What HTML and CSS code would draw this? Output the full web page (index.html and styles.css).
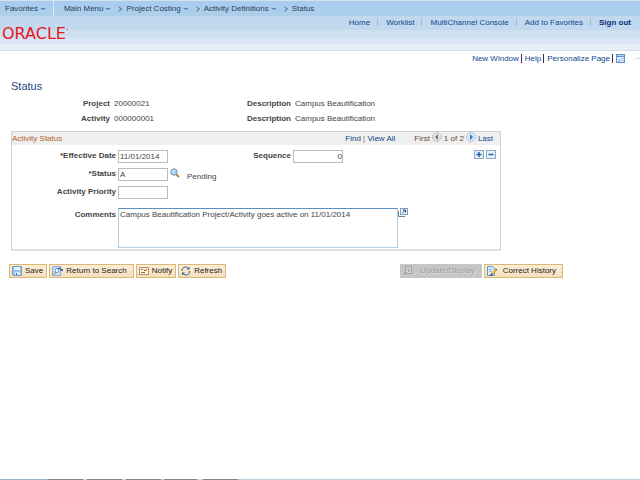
FILE: index.html
```html
<!DOCTYPE html>
<html lang="en">
<head>
    <meta charset="utf-8">
    <meta name="viewport" content="width=device-width, initial-scale=1.0">
    <title>Status</title>
    <link rel="stylesheet" href="styles.css">
</head>
<body>
    <header class="banner">
        <nav class="crumbs">
            <a class="favorites" href="#">Favorites<span class="caret"></span></a>
            <a class="menu" href="#">Main Menu<span class="caret"></span></a>
            <span class="chevron"></span>
            <a href="#">Project Costing<span class="caret"></span></a>
            <span class="chevron"></span>
            <a href="#">Activity Definitions<span class="caret"></span></a>
            <span class="chevron"></span>
            <a href="#">Status</a>
        </nav>
        <div class="brand">
            <div class="logo">ORACLE<span class="mark"></span></div>
            <nav class="links">
                <a href="#">Home</a>
                <a href="#">Worklist</a>
                <a href="#">MultiChannel Console</a>
                <a href="#">Add to Favorites</a>
                <a class="signout" href="#">Sign out</a>
            </nav>
        </div>
    </header>

    <nav class="pagebar">
        <a href="#">New Window</a>
        <a href="#">Help</a>
        <a href="#">Personalize Page</a>
        <a href="#" aria-label="Page URL">
            <svg width="9" height="9" viewBox="0 0 9 9">
                <rect x="0.5" y="0.5" width="8" height="8" fill="#dce9fa" stroke="#5c8fd6"/>
                <path d="M0 0h9v3H0z" fill="#5c8fd6"/>
                <path d="M1 1.5h7" stroke="#b9d3f5"/>
                <path d="M2 5h2v3H2zM5 4h3v1H5zM5 6h3v1H5z" fill="#a9c6ee"/>
            </svg>
        </a>
        <span class="corner"></span>
    </nav>

    <main class="content">
        <h1>Status</h1>

        <dl class="keys">
            <dt>Project</dt><dd>20000021</dd>
            <dt>Description</dt><dd>Campus Beautification</dd>
            <dt>Activity</dt><dd>000000001</dd>
            <dt>Description</dt><dd>Campus Beautification</dd>
        </dl>

        <section class="panel">
            <div class="panel-head">
                <h2>Activity Status</h2>
                <div class="find"><a href="#">Find</a> <i>|</i> <a href="#">View All</a></div>
                <div class="pager">
                    <span>First</span>
                    <button class="step" aria-label="Previous row" disabled>
                        <svg width="10" height="10" viewBox="0 0 10 10">
                            <circle cx="5" cy="5" r="4.5" fill="#e2e2e2" stroke="#c4c4c4"/>
                            <path d="M6 2v6L3 5z" fill="#777"/>
                        </svg>
                    </button>
                    <span>1 of 2</span>
                    <button class="step" aria-label="Next row">
                        <svg width="10" height="10" viewBox="0 0 10 10">
                            <circle cx="5" cy="5" r="4.5" fill="#d9e6f3" stroke="#b7cbe0"/>
                            <path d="M4 2v6l3-3z" fill="#4179b5"/>
                        </svg>
                    </button>
                    <a href="#">Last</a>
                </div>
            </div>

            <form class="fields">
                <label for="effdt">*Effective Date</label>
                <input id="effdt" type="text" value="11/01/2014">
                <label for="seq">Sequence</label>
                <input id="seq" class="number" type="text" value="0">
                <div class="rows">
                    <button type="button" class="rowbtn" aria-label="Add row">
                        <svg width="10" height="9" viewBox="0 0 10 9">
                            <rect x="0.5" y="0.5" width="9" height="8" fill="#e4eef8" stroke="#8eaac4"/>
                            <path d="M5 2v5M2.5 4.5h5" stroke="#1c5ba8" stroke-width="1.4"/>
                        </svg>
                    </button>
                    <button type="button" class="rowbtn" aria-label="Delete row">
                        <svg width="10" height="9" viewBox="0 0 10 9">
                            <rect x="0.5" y="0.5" width="9" height="8" fill="#e4eef8" stroke="#8eaac4"/>
                            <path d="M2.5 4.5h5" stroke="#1c5ba8" stroke-width="1.4"/>
                        </svg>
                    </button>
                </div>

                <label for="status">*Status</label>
                <input id="status" type="text" value="A">
                <div class="lookup">
                    <button type="button" class="bare" aria-label="Look up status">
                        <svg width="10" height="10" viewBox="0 0 10 10">
                            <path d="M6 6l3 3" stroke="#b3804a" stroke-width="1.8"/>
                            <circle cx="4" cy="4" r="3.2" fill="#a9d4f3" stroke="#7295b5"/>
                            <path d="M2.5 3.5q.5-1.2 1.8-1.2" fill="none" stroke="#fff"/>
                        </svg>
                    </button>
                    <span>Pending</span>
                </div>

                <label class="first" for="priority">Activity Priority</label>
                <input id="priority" type="text">

                <label class="first comment-label" for="comments">Comments</label>
                <div class="comment">
                    <textarea id="comments">Campus Beautification Project/Activity goes active on 11/01/2014</textarea>
                    <button type="button" class="bare" aria-label="Expand comments">
                        <svg width="10" height="9" viewBox="0 0 10 9">
                            <path d="M0.5 3v5.5H7" fill="none" stroke="#6a7f9c"/>
                            <rect x="2.5" y="0.5" width="7" height="6" fill="#eef4fb" stroke="#7f9bbd"/>
                            <path d="M4.5 5l2.8-2.8M5 2h2.5v2.5" fill="none" stroke="#25477c"/>
                        </svg>
                    </button>
                </div>
            </form>
        </section>

        <div class="toolbar">
            <button class="tool">
                <svg width="10" height="10" viewBox="0 0 10 10">
                    <path d="M0.5 0.5h9v9h-8l-1-1z" fill="#9cc2ee" stroke="#6f9cd6"/>
                    <path d="M2 1h6v3H2z" fill="#eaf3ff"/>
                    <path d="M3 6h5v3H3z" fill="#dfeafa"/>
                    <path d="M4 7h1v2H4z" fill="#3b69a8"/>
                </svg>
                Save
            </button>
            <button class="tool search">
                <svg width="11" height="10" viewBox="0 0 11 10">
                    <path d="M0.5 0.5h8v9h-8z" fill="#cfe2f8" stroke="#86aee0"/>
                    <path d="M1.5 8.5l3-3" stroke="#d09a50" stroke-width="1.5"/>
                    <circle cx="5" cy="4.5" r="2" fill="#fff" stroke="#5c8cc8"/>
                    <path d="M6 2.5q3-1.5 4 2M8.5 3.5l1.5 1.5 1-2" fill="none" stroke="#234b8c"/>
                </svg>
                Return to Search
            </button>
            <button class="tool">
                <svg width="10" height="9" viewBox="0 0 10 9">
                    <rect x="0.5" y="0.5" width="9" height="7" fill="#fdf3dd" stroke="#b8926a"/>
                    <path d="M2 2.5h2M2 5.5h4" stroke="#777"/>
                    <path d="M5 3l1 1 2-2" fill="none" stroke="#c23b2b"/>
                </svg>
                Notify
            </button>
            <button class="tool">
                <svg width="10" height="10" viewBox="0 0 10 10">
                    <path d="M1 5a3.5 3.5 0 0 1 6-3M8.5 5a3.5 3.5 0 0 1-6 3" fill="none" stroke="#2f5f9f"/>
                    <path d="M8.5 0.5v3H5.5zM1 9.5v-3h3z" fill="#2f5f9f"/>
                </svg>
                Refresh
            </button>
            <div class="modes">
                <button class="tool update" disabled>
                    <svg width="10" height="10" viewBox="0 0 10 10">
                        <rect x="2.5" y="0.5" width="6" height="7" fill="#d6d6d6" stroke="#a2a2a2"/>
                        <path d="M0.5 9l3-3M4 3h2v3" fill="none" stroke="#8f8f8f"/>
                    </svg>
                    Update/Display
                </button>
                <button class="tool">
                    <svg width="11" height="10" viewBox="0 0 11 10">
                        <path d="M0.5 0.5h5l2 2v7h-7z" fill="#dcebff" stroke="#5f93da"/>
                        <path d="M2 3.5h3M2 5.5h3" stroke="#8db4e8"/>
                        <path d="M4.5 8.5l5-5" stroke="#e6b321" stroke-width="2"/>
                        <path d="M3.5 9.5l1-2 1 1zM8.7 2.7l1.5 1.5" stroke="#4a5668" fill="#4a5668"/>
                    </svg>
                    Correct History
                </button>
            </div>
        </div>
    </main>

    <footer class="edge"></footer>
</body>
</html>
```

FILE: styles.css
```css
* {
    box-sizing: border-box;
}
body {
    margin: 0;
    min-height: 100vh;
    display: flex;
    flex-direction: column;
    background: #fff;
    color: #444;
    font: 8px/12px "Liberation Sans", Arial, sans-serif;
}
a {
    color: #0f478f;
    text-decoration: none;
}
button, input, textarea {
    font: inherit;
    color: inherit;
    margin: 0;
}
svg {
    display: block;
}

/* banner */
.banner {
    height: 51px;
    border-bottom: 1px solid #d8dde4;
    background: linear-gradient(#c2d8ef 0 30px, #cedff0 30px 38px, #dae6f5 38px 44px, #e7f0f9 44px);
}
.crumbs {
    display: flex;
    align-items: center;
    height: 16px;
    border-top: 1px solid #d0e2ee;
    background: linear-gradient(#a8cbf0, #acd0e8);
}
.crumbs a {
    display: flex;
    align-items: center;
    color: #27405f;
}
.crumbs .favorites {
    height: 15px;
    padding: 0 7px 0 5px;
    border-right: 1px solid #dcebf8;
}
.crumbs .menu {
    padding-left: 10px;
}
.caret {
    margin-left: 2px;
    border: 3px solid transparent;
    border-top: 2px solid #5488bb;
    border-bottom: 0;
}
.chevron {
    width: 4px;
    height: 4px;
    margin: 0 5px 0 6px;
    border: solid #5580a8;
    border-width: 1px 1px 0 0;
    transform: rotate(45deg);
}
.brand {
    display: flex;
    justify-content: space-between;
}
.logo {
    display: flex;
    padding: 9px 0 0 2px;
    color: #e8141c;
    font: 16px/18px "DejaVu Sans", sans-serif;
}
.mark {
    width: 1px;
    height: 1px;
    margin: 4px 0 0 1px;
    background: #e8141c;
}
.links {
    display: flex;
    padding-right: 9px;
}
.links a {
    position: relative;
    margin-left: 16px;
    line-height: 13px;
}
.links a + a::before {
    content: "";
    position: absolute;
    left: -9px;
    top: 2px;
    height: 8px;
    border-left: 1px solid #a9bccb;
}
.links .signout {
    color: #003078;
    font-weight: bold;
}

/* page links */
.pagebar {
    display: flex;
    justify-content: flex-end;
    align-items: center;
    height: 15px;
    line-height: 9px;
}
.pagebar a + a {
    margin-left: 2px;
    padding-left: 3px;
    border-left: 1px solid #402850;
}
.corner {
    width: 5px;
    height: 2px;
    margin-left: 10px;
    border-top: 1px solid #ddd;
}

/* content */
.content {
    flex: 1;
    padding: 13px 11px;
}
h1 {
    margin: 0 0 5px;
    color: #24477c;
    font-size: 11px;
    font-weight: normal;
    line-height: 14px;
}
.keys {
    display: grid;
    grid-template-columns: 99px 74px 99px 1fr;
    column-gap: 4px;
    row-gap: 3px;
    margin: 0 0 6px;
}
.keys dt {
    font-weight: bold;
    text-align: right;
}
.keys dd {
    margin: 0;
}
.panel {
    max-width: 490px;
    border: 1px solid #c6d0d5;
    border-bottom: 2px solid #dde3e5;
    padding-bottom: 1px;
}
.panel-head {
    display: flex;
    align-items: center;
    height: 13px;
    padding-right: 7px;
    background: #efefef;
}
h2 {
    margin: 0;
    color: #b5622a;
    font-size: 8px;
    font-weight: normal;
}
.find {
    margin-left: auto;
}
.find i {
    color: #a5622a;
    font-style: normal;
}
.pager {
    display: flex;
    align-items: center;
    gap: 2px;
    margin-left: 19px;
}
.pager span {
    color: #6b4a3a;
}
.step, .rowbtn, .bare {
    padding: 0;
    border: 0;
    background: none;
}
.step {
    margin-bottom: 3px;
}
.fields {
    display: grid;
    grid-template-columns: 104px 50px 121px 50px 1fr;
    column-gap: 2px;
    row-gap: 5px;
    padding-top: 5px;
}
.fields label {
    font-weight: bold;
    text-align: right;
}
.fields label.first {
    grid-column: 1;
}
.fields input {
    width: 50px;
    height: 13px;
    padding: 0 1px;
    border: 1px solid #bbb;
    background: #fff;
}
.fields .number {
    padding: 0;
    text-align: right;
}
.rows {
    display: flex;
    justify-content: flex-end;
    gap: 2px;
    padding-right: 4px;
}
.rowbtn {
    height: 9px;
}
.lookup {
    grid-column: 3 / -1;
    display: flex;
    gap: 7px;
}
.lookup span {
    padding-top: 4px;
    line-height: 9px;
}
.bare {
    align-self: flex-start;
}
.comment-label {
    padding-top: 5px;
}
.comment {
    grid-column: 2 / -1;
    display: flex;
    padding-top: 4px;
}
textarea {
    width: 280px;
    height: 40px;
    padding: 0 1px;
    border: 1px solid #b4d0e4;
    border-top-color: #5a8fbf;
    resize: none;
    overflow: hidden;
}

/* buttons */
.toolbar {
    display: flex;
    gap: 2px;
    max-width: 554px;
    margin: 13px 0 0 -2px;
}
.tool {
    display: flex;
    align-items: center;
    gap: 3px;
    height: 14px;
    padding: 0 3px 0 2px;
    border: 1px solid #dcb878;
    background: linear-gradient(#fbeed6, #f5e0ba);
    color: #222;
    white-space: nowrap;
}
.tool:disabled {
    border-color: #c6c6c6;
    background: #c6c6c6;
    color: #9c9c9c;
    text-shadow: 1px 1px 0 #e0e0e0;
}
.tool.search {
    padding-right: 6px;
}
.modes {
    display: flex;
    gap: 2px;
    margin-left: auto;
}
.modes .tool {
    gap: 5px;
    padding-right: 6px;
}
.modes .update {
    gap: 7px;
}

.edge {
    height: 1px;
    background: linear-gradient(90deg, #9bb3c8 0 48px, #7f858c 48px 83px, #c5d6e6 83px 87px, #7f858c 87px 122px, #c5d6e6 122px 126px, #7f858c 126px 161px, #c5d6e6 161px 164px, #7f858c 164px 197px, #c5d6e6 197px 203px, #7f858c 203px 238px, #bccfdd 238px);
}
```
